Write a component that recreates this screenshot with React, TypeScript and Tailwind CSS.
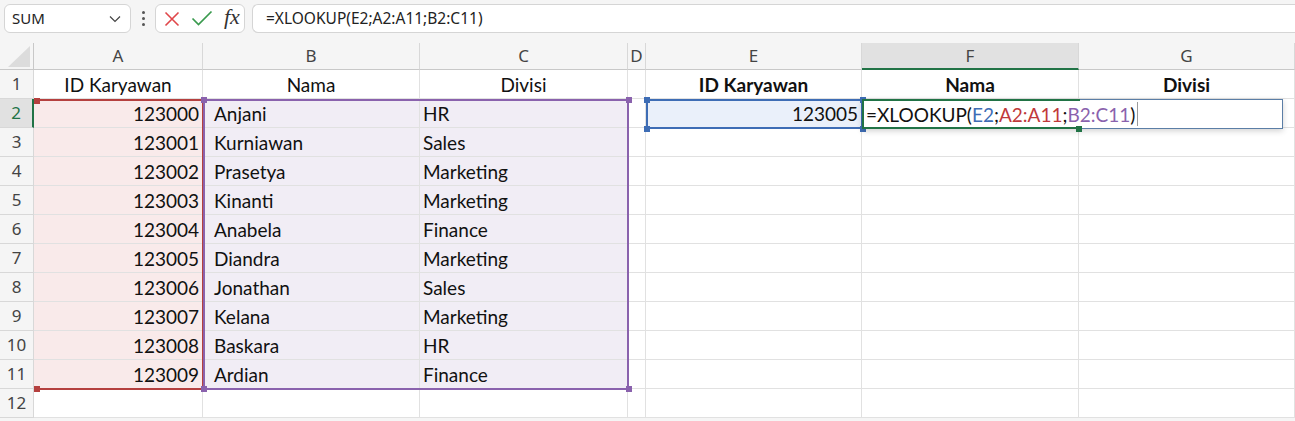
import React from "react";

const rows = [
  { id: "123000", nama: "Anjani", divisi: "HR" },
  { id: "123001", nama: "Kurniawan", divisi: "Sales" },
  { id: "123002", nama: "Prasetya", divisi: "Marketing" },
  { id: "123003", nama: "Kinanti", divisi: "Marketing" },
  { id: "123004", nama: "Anabela", divisi: "Finance" },
  { id: "123005", nama: "Diandra", divisi: "Marketing" },
  { id: "123006", nama: "Jonathan", divisi: "Sales" },
  { id: "123007", nama: "Kelana", divisi: "Marketing" },
  { id: "123008", nama: "Baskara", divisi: "HR" },
  { id: "123009", nama: "Ardian", divisi: "Finance" },
];

const letters = ["A", "B", "C", "D", "E", "F", "G"];

const cell =
  "h-[29px] border-r border-b border-[#e1e1e1] flex items-center text-[19px] leading-none text-[#111] overflow-hidden whitespace-nowrap";

function Handle({ className }: { className: string }) {
  return <div className={`absolute w-[6px] h-[6px] ${className}`} />;
}

function FormulaBar() {
  return (
    <div className="h-[43px] flex items-start pt-[4px] gap-[7px] pl-[4px] font-['Noto_Sans',sans-serif]">
      {/* Name box */}
      <div className="w-[127px] h-[29px] bg-white border border-[#d5d5d5] rounded-[6px] flex items-center justify-between pl-[7px] pr-[9px]">
        <span className="text-[15px] text-[#222]">SUM</span>
        <svg width="12" height="8" viewBox="0 0 12 8" fill="none">
          <path d="M1 1.5 6 6.5 11 1.5" stroke="#444" strokeWidth="1.2" />
        </svg>
      </div>
      {/* dots */}
      <div className="h-[29px] w-[10px] flex flex-col items-center justify-center gap-[3px]">
        <div className="w-[3px] h-[3px] bg-[#555] rounded-full" />
        <div className="w-[3px] h-[3px] bg-[#555] rounded-full" />
        <div className="w-[3px] h-[3px] bg-[#555] rounded-full" />
      </div>
      {/* cancel / enter / fx */}
      <div className="w-[90px] h-[29px] bg-white border border-[#d5d5d5] rounded-[6px] flex items-center pl-[8px] gap-[11px]">
        <svg width="16" height="16" viewBox="0 0 16 16" fill="none">
          <path d="M1.5 1.5 14.5 14.5M14.5 1.5 1.5 14.5" stroke="#e0474a" strokeWidth="1.6" />
        </svg>
        <svg width="22" height="17" viewBox="0 0 22 17" fill="none">
          <path d="M1.5 8.5 7.5 14.5 20.5 1.5" stroke="#3a9a4e" strokeWidth="1.7" />
        </svg>
        <span className="text-[22px] italic text-[#333] font-['Liberation_Serif',serif] leading-none -mt-[4px]">
          fx
        </span>
      </div>
      {/* formula input */}
      <div className="flex-1 h-[29px] bg-white border border-r-0 border-[#d5d5d5] rounded-l-[6px] flex items-center pl-[13px]">
        <span className="text-[15.5px] text-[#222]">=XLOOKUP(E2;A2:A11;B2:C11)</span>
      </div>
    </div>
  );
}

export default function App() {
  return (
    <div className="w-[1295px] h-[421px] overflow-hidden bg-[#f5f5f5] font-['Lato',sans-serif]">
      <FormulaBar />
      <div className="relative grid grid-cols-[34px_169px_217px_208px_18px_216px_217px_216px] bg-white">
        {/* column header row */}
        <div className="h-[27px] bg-[#f5f5f5] border-r border-b border-[#c8c8c8] relative">
          <svg className="absolute left-[8px] top-[3px]" width="22" height="21" viewBox="0 0 22 21">
            <path d="M22 0 22 21 0 21Z" fill="#dcdcdc" />
          </svg>
        </div>
        {letters.map((l) => (
          <div
            key={l}
            className={`h-[27px] flex items-center justify-center text-[17px] text-[#444] font-['Noto_Sans',sans-serif] border-r border-[#d8d8d8] ${
              l === "F" ? "bg-[#e1e1e1] border-b-2 border-b-[#217346]" : "bg-[#f5f5f5] border-b border-b-[#c8c8c8]"
            }`}
          >
            {l}
          </div>
        ))}

        {/* row 1 */}
        <div className="h-[29px] bg-[#f5f5f5] border-r border-b border-[#d8d8d8] flex items-center justify-center text-[17px] text-[#444] font-['Noto_Sans',sans-serif]">
          1
        </div>
        <div className={`${cell} justify-center`}>ID Karyawan</div>
        <div className={`${cell} justify-center`}>Nama</div>
        <div className={`${cell} justify-center`}>Divisi</div>
        <div className={cell} />
        <div className={`${cell} justify-center font-bold`}>ID Karyawan</div>
        <div className={`${cell} justify-center font-bold`}>Nama</div>
        <div className={`${cell} justify-center font-bold`}>Divisi</div>

        {/* data rows */}
        {rows.map((r, i) => {
          const n = i + 2;
          return (
            <React.Fragment key={r.id}>
              <div
                className={`h-[29px] border-b border-[#d8d8d8] flex items-center justify-center text-[17px] font-['Noto_Sans',sans-serif] ${
                  n === 2
                    ? "bg-[#e1e1e1] text-[#217346] border-r-2 border-r-[#217346]"
                    : "bg-[#f5f5f5] text-[#444] border-r border-r-[#d8d8d8]"
                }`}
              >
                {n}
              </div>
              <div className={`${cell} justify-end pr-[3px] bg-[#f9eaea]`}>{r.id}</div>
              <div className={`${cell} pl-[11px] bg-[#f1edf5]`}>{r.nama}</div>
              <div className={`${cell} pl-[3px] bg-[#f1edf5]`}>{r.divisi}</div>
              <div className={cell} />
              <div className={`${cell} justify-end pr-[3px] ${n === 2 ? "bg-[#eaf0fa]" : ""}`}>
                {n === 2 ? "123005" : ""}
              </div>
              <div className={cell} />
              <div className={cell} />
            </React.Fragment>
          );
        })}

        {/* row 12 */}
        <div className="h-[29px] bg-[#f5f5f5] border-r border-b border-[#d8d8d8] flex items-center justify-center text-[17px] text-[#444] font-['Noto_Sans',sans-serif]">
          12
        </div>
        {letters.map((l) => (
          <div key={l} className={cell} />
        ))}

        {/* reference highlight A2:A11 */}
        <div className="absolute left-[34px] top-[56px] w-[170px] h-[291px] border-2 border-l-0 border-[#b5403f] pointer-events-none" />
        {/* reference highlight B2:C11 */}
        <div className="absolute left-[203px] top-[56px] w-[426px] h-[291px] border-2 border-[#8a62ad] pointer-events-none" />
        <Handle className="bg-[#b5403f] left-[34px] top-[55px] w-[3px]" />
        <Handle className="bg-[#b5403f] left-[34px] top-[343px] w-[3px]" />
        <Handle className="bg-[#8a62ad] left-[201px] top-[54px]" />
        <Handle className="bg-[#8a62ad] left-[626px] top-[54px]" />
        <Handle className="bg-[#8a62ad] left-[201px] top-[343px]" />
        <Handle className="bg-[#8a62ad] left-[626px] top-[343px]" />

        {/* reference highlight E2 */}
        <div className="absolute left-[646px] top-[56px] w-[217px] h-[30px] border-2 border-[#3e6db5] pointer-events-none" />
        <Handle className="bg-[#3e6db5] left-[644px] top-[54px]" />
        <Handle className="bg-[#3e6db5] left-[860px] top-[54px]" />
        <Handle className="bg-[#3e6db5] left-[644px] top-[83px]" />
        <Handle className="bg-[#3e6db5] left-[860px] top-[83px]" />

        {/* in-cell editor F2 */}
        <div className="absolute left-[862px] top-[56px] w-[421px] h-[30px] bg-white border border-[#5b7ea6] shadow-[0_2px_6px_rgba(0,0,0,0.18)] flex items-center pl-[3px] text-[19px] leading-none text-[#111] whitespace-nowrap">
          <span>=XLOOKUP(</span>
          <span className="text-[#3e6db5]">E2</span>
          <span>;</span>
          <span className="text-[#c0393b]">A2:A11</span>
          <span>;</span>
          <span className="text-[#8a62ad]">B2:C11</span>
          <span>)</span>
          <span className="ml-[2px] w-px h-[24px] bg-[#9a9a9a]" />
        </div>
        {/* active cell outline */}
        <div className="absolute left-[862px] top-[56px] w-[218px] h-[30px] border-2 border-r-0 border-[#217346] pointer-events-none" />
        <Handle className="bg-[#217346] left-[1076px] top-[83px]" />
      </div>
    </div>
  );
}
